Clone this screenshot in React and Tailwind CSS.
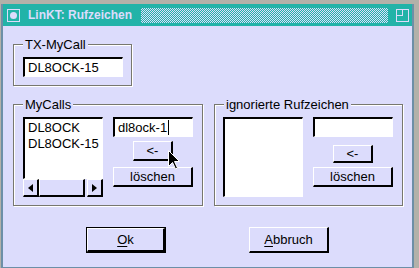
const font = { fontFamily: '"Liberation Sans", Arial, sans-serif' };

function Group({ label, className, children }) {
  return (
    <div className={`relative border border-[#77776f] shadow-[1px_1px_0_#fff,inset_1px_1px_0_#fff] ${className}`}>
      <span className="absolute -top-[8px] left-[9px] bg-[#dcdcfc] px-[2px] text-[13px] leading-[15px] text-black">
        {label}
      </span>
      {children}
    </div>
  );
}

function Field({ value, caret, className }) {
  return (
    <div className={`flex items-center border-t-2 border-l-2 border-r border-b border-t-black border-l-black border-r-white border-b-white bg-white pl-[3px] text-[13px] leading-[15px] text-black ${className}`}>
      {value}
      {caret && <span className="ml-[1px] inline-block h-[15px] w-[1px] bg-black" />}
    </div>
  );
}

function Button({ children, className }) {
  return (
    <div className={`flex items-center justify-center border-t border-l border-r-2 border-b-2 border-t-white border-l-white border-r-black border-b-black bg-[#dcdcfc] text-[13px] leading-[15px] text-black ${className}`}>
      {children}
    </div>
  );
}

function ListBox({ className, children }) {
  return (
    <div className={`border-t-2 border-l-2 border-r border-b border-t-black border-l-black border-r-white border-b-white bg-white ${className}`}>
      {children}
    </div>
  );
}

function ScrollBar() {
  return (
    <div className="flex h-[18px] w-[80px] bg-[#dcdcfc]">
      <div className="flex w-[16px] items-center justify-center border-t border-l border-r-2 border-b-2 border-t-white border-l-white border-r-black border-b-black">
        <svg width="5" height="8" viewBox="0 0 5 8"><path d="M5 0V8L0 4Z" fill="#000" /></svg>
      </div>
      <div className="w-[46px] border-t border-l border-r-2 border-b-2 border-t-white border-l-white border-r-black border-b-black" />
      <div className="w-[2px]" />
      <div className="flex w-[16px] items-center justify-center border-t border-l border-r-2 border-b-2 border-t-white border-l-white border-r-black border-b-black">
        <svg width="5" height="8" viewBox="0 0 5 8"><path d="M0 0V8L5 4Z" fill="#000" /></svg>
      </div>
    </div>
  );
}

export default function App() {
  return (
    <div className="h-[268px] w-[419px] overflow-hidden bg-[#b3b1a9] pt-[4px] pl-[1px]" style={font}>
      <div className="flex h-[264px] w-[413px] flex-col border-x-2 border-b border-[#6d8fa7] bg-[#dcdcfc]">
        {/* title bar */}
        <div className="flex h-[22px] shrink-0 items-center bg-[#22b3a8]">
          <div className="ml-[4px] flex h-[13px] w-[13px] items-center justify-center border border-[#dcdcfc]">
            <div className="h-[7px] w-[7px] rounded-full bg-[#dcdcfc]" />
          </div>
          <span className="ml-[8px] text-[12px] font-bold leading-[14px] text-[#dcdcfc]">LinKT: Rufzeichen</span>
          <div className="ml-[9px] h-[15px] w-[247px] bg-[repeating-conic-gradient(#dcdcfc_0%_25%,#22b3a8_0%_50%)] bg-[length:2px_2px]" />
          <div className="relative ml-[8px] h-[13px] w-[13px] border border-[#dcdcfc]">
            <div className="h-[6px] w-[6px] border-r border-b border-[#dcdcfc]" />
          </div>
        </div>

        {/* body */}
        <div className="relative flex-1 pl-[10px] pt-[18px]">
          <Group label="TX-MyCall" className="h-[42px] w-[119px] pl-[9px] pt-[12px]">
            <Field value="DL8OCK-15" className="h-[20px] w-[100px]" />
          </Group>

          <div className="mt-[18px] flex gap-[11px]">
            <Group label="MyCalls" className="flex h-[102px] w-[190px] gap-[10px] pl-[9px] pt-[12px]">
              <div className="flex flex-col">
                <ListBox className="h-[62px] w-[80px] pl-[3px] pt-[1px] text-[13px] leading-[16px] text-black">
                  <div>DL8OCK</div>
                  <div>DL8OCK-15</div>
                </ListBox>
                <ScrollBar />
              </div>
              <div className="flex flex-col">
                <Field value="dl8ock-1" caret className="h-[20px] w-[80px]" />
                <Button className="ml-[20px] mt-[4px] h-[20px] w-[40px]">&lt;-</Button>
                <Button className="mt-[6px] h-[20px] w-[80px]">löschen</Button>
              </div>
            </Group>

            <Group label="ignorierte Rufzeichen" className="flex h-[102px] w-[189px] gap-[10px] pl-[8px] pt-[12px]">
              <ListBox className="h-[80px] w-[80px]" />
              <div className="flex flex-col">
                <Field value="" className="h-[20px] w-[80px]" />
                <Button className="ml-[20px] mt-[8px] h-[18px] w-[40px]">&lt;-</Button>
                <Button className="mt-[4px] h-[20px] w-[80px]">löschen</Button>
              </div>
            </Group>
          </div>

          <div className="mt-[21px] flex gap-[83px] pl-[73px]">
            <div className="h-[26px] w-[80px] border border-black">
              <Button className="h-full w-full">
                <span className="underline underline-offset-2">O</span>k
              </Button>
            </div>
            <Button className="h-[26px] w-[80px]">
              <span className="underline underline-offset-2">A</span>bbruch
            </Button>
          </div>

          {/* mouse pointer */}
          <svg className="absolute left-[165px] top-[124px]" width="12" height="20" viewBox="0 0 12 20">
            <path d="M0.5 0.5V16.5L4.5 12.5L7.5 19L9.5 18L6.5 11.5H11.5Z" fill="#000" stroke="#fff" strokeWidth="1" />
          </svg>
        </div>
      </div>
    </div>
  );
}
